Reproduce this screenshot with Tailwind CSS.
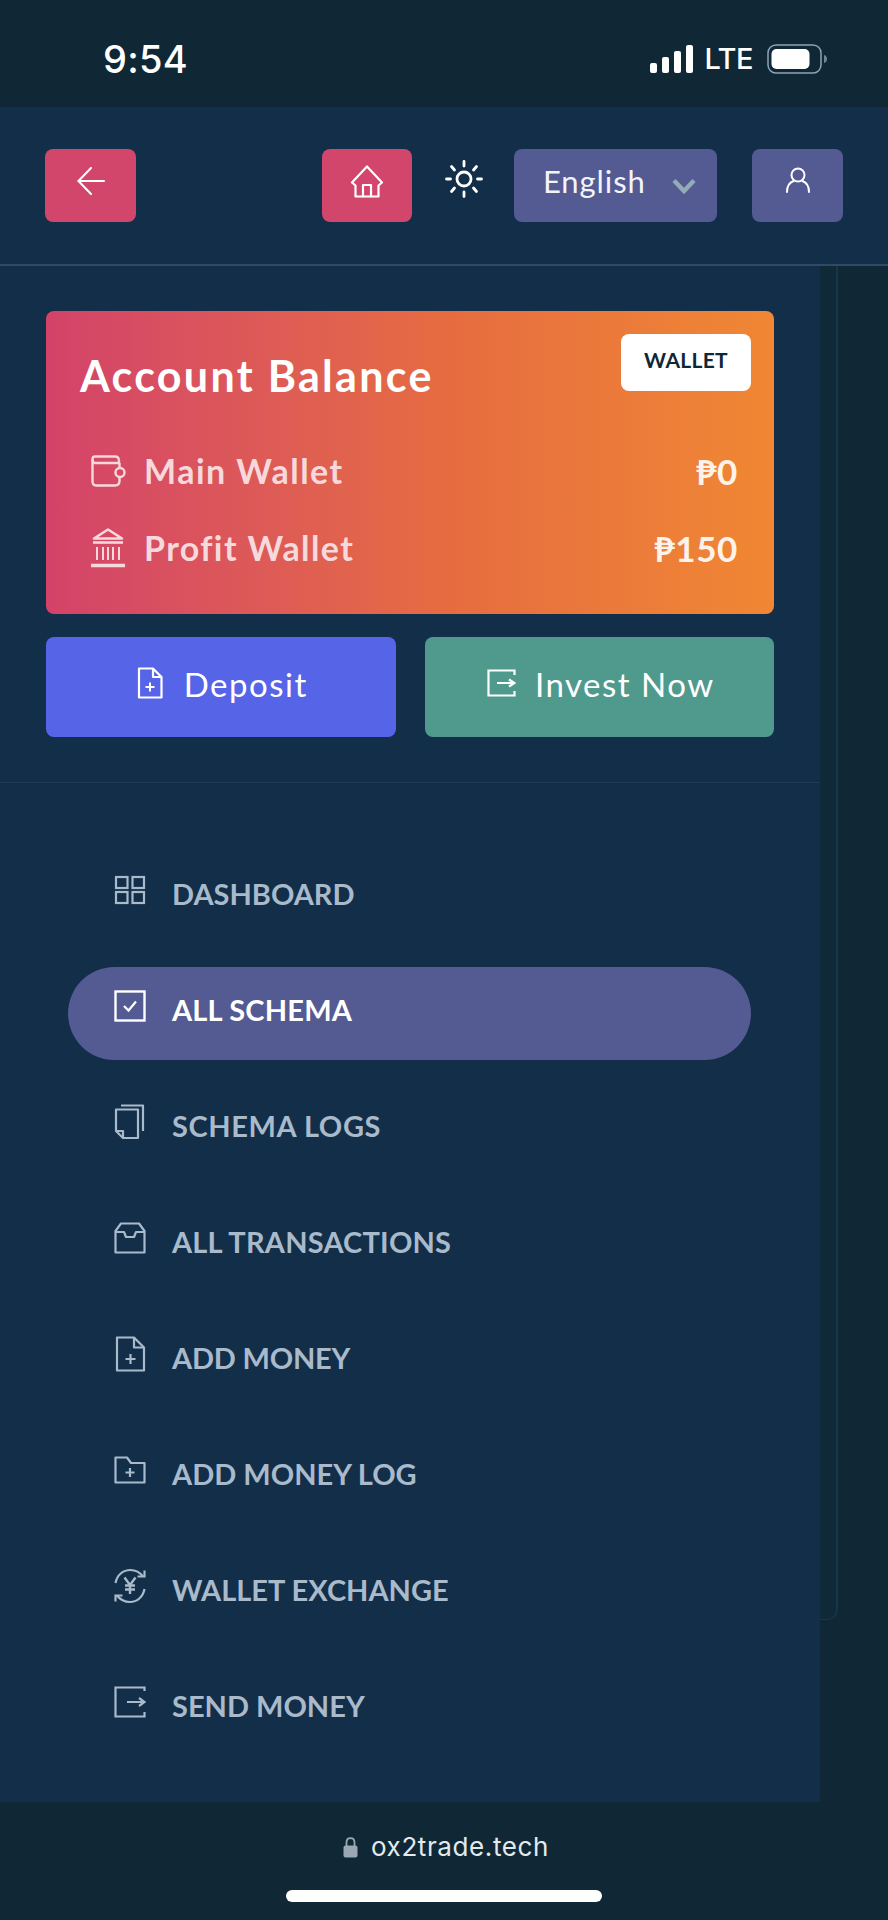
<!DOCTYPE html>
<html lang="en">
<head>
<meta charset="utf-8">
<title>ox2trade</title>
<script src="https://cdn.jsdelivr.net/npm/@tailwindcss/browser@4"></script>
</head>
<body class="m-0 bg-[#102735]">
<div class="w-[888px] h-[1920px] flex flex-col overflow-hidden bg-[#102735] font-['Lato',sans-serif]">

  <!-- status bar -->
  <div class="h-[107px] shrink-0 flex items-start pt-[37px] pl-[103px] text-white">
    <span class="font-['Inter',sans-serif] font-medium text-[38px] leading-[44px] tracking-[0.3px]">9:54</span>
    <div class="ml-auto flex items-center h-[44px] pr-[60px]">
      <svg width="44" height="28" viewBox="0 0 44 28" fill="#fff"><rect x="0" y="18" width="7" height="10" rx="2"/><rect x="12" y="12" width="7" height="16" rx="2"/><rect x="24" y="6" width="7" height="22" rx="2"/><rect x="36" y="0" width="7" height="28" rx="2"/></svg>
      <span class="ml-[10px] font-['Inter',sans-serif] text-[29px] leading-[44px] font-medium tracking-[-0.5px]">LTE</span>
      <svg class="ml-[14px]" width="61" height="30" viewBox="0 0 61 30"><rect x="1" y="1" width="53" height="28" rx="8" fill="none" stroke="#8fa3b8" stroke-width="1.5"/><rect x="4.5" y="5" width="38" height="20" rx="5" fill="#fff"/><path d="M57 11c2 .6 3 2 3 4s-1 3.400-3 4z" fill="#6f8496"/></svg>
    </div>
  </div>

  <!-- top header -->
  <div class="h-[159px] shrink-0 bg-[#122e49] border-b-[2px] border-[#2e4a64] flex items-start pt-[42px] pl-[45px] pr-[45px]">
    <div class="w-[91px] h-[73px] rounded-[8px] bg-[#d2466b] flex justify-center pt-[18px]">
      <svg width="28" height="28" viewBox="0 0 28 28" fill="none" stroke="#fff" stroke-width="2" stroke-linecap="round" stroke-linejoin="round"><path d="M14 1 1.500 14 14 27"/><path d="M1.500 14H27"/></svg>
    </div>
    <div class="ml-auto w-[90px] h-[73px] rounded-[8px] bg-[#d2466b] flex justify-center pt-[16px]">
      <svg width="34" height="33" viewBox="0 0 34 33" fill="none" stroke="#fff" stroke-width="2.200" stroke-linejoin="round" stroke-linecap="round"><path d="M17 1.500 2 17.500 5.500 20.500V31.500H28.500V20.500L32 17.500z"/><path d="M13 31.500V20H21V31.500"/></svg>
    </div>
    <svg class="ml-[33px] mt-[11px]" width="38" height="38" viewBox="0 0 38 38" fill="none" stroke="#fff" stroke-width="2.800" stroke-linecap="round"><circle cx="19" cy="19" r="7"/><path d="M19 1.500V6M19 32V36.500M1.500 19H5.500M32.500 19H36.500M6.500 6.500 9.500 10M28.500 28 31.500 31.500M31.500 6.500 28.500 10M9.500 28 6.500 31.500"/></svg>
    <div class="ml-[31px] w-[203px] h-[73px] rounded-[8px] bg-[#545a92] flex items-start pl-[29px] pt-[12px] text-[#f3f4f8]">
      <span class="text-[31px] leading-[40px] tracking-[0.9px]">English</span>
      <svg class="ml-[26px] mt-[17px]" width="24" height="16" viewBox="0 0 24 16" fill="none" stroke="#93abb6" stroke-width="4.500"><path d="M2 2.500 12 13 22 2.500"/></svg>
    </div>
    <div class="ml-[35px] w-[91px] h-[73px] rounded-[8px] bg-[#545a92] flex justify-center pt-[18px]">
      <svg width="26" height="26" viewBox="0 0 26 26" fill="none" stroke="#fff" stroke-width="2" stroke-linecap="round"><circle cx="13" cy="8" r="6.500"/><path d="M2 25c0-6 2.500-9.500 6.500-11M24 25c0-6-2.500-9.500-6.500-11"/></svg>
    </div>
  </div>

  <!-- body -->
  <div class="flex-1 flex min-h-0">
    <aside class="w-[820px] shrink-0 bg-[#122e49] flex flex-col">
      <div class="h-[517px] shrink-0 border-b border-[#1f3a55] px-[46px] pt-[45px]">
        <!-- balance card -->
        <div class="h-[303px] rounded-[8px] bg-gradient-to-r from-[#d34269] via-[#e66c40] via-55% to-[#f08733] relative pl-[34px] pr-[36px]">
          <div class="absolute right-[23px] top-[23px] w-[130px] h-[57px] rounded-[8px] bg-white flex items-center justify-center pb-[6px] text-[#102735] font-bold text-[21px] tracking-[0.3px]">WALLET</div>
          <div class="pt-[40px] text-white font-bold text-[43px] leading-[50px] tracking-[2.300px]">Account Balance</div>
          <div class="mt-[46px] flex items-center h-[48px] pl-[11px]">
            <svg width="36" height="32" viewBox="0 0 36 32" fill="none" stroke="#f6d9dc" stroke-width="2.400" stroke-linejoin="round"><path d="M4 1.500H24C27 1.500 28 3 28 6V8H4C2.500 8 1.500 6.500 1.500 4.500S2.500 1.500 4 1.500z"/><path d="M1.500 4.500V26C1.500 29 3 30.500 5 30.500H24C27 30.500 28.500 29 28.500 26V22"/><path d="M28.500 8V13"/><circle cx="29" cy="17.500" r="4.500"/></svg>
            <span class="ml-[17px] text-[#f6d9dc] font-bold text-[34px] leading-[48px] tracking-[1.500px]">Main Wallet</span>
            <span class="ml-auto text-[#fdf3ea] font-bold text-[35px] leading-[48px] tracking-[0.6px]">₱0</span>
          </div>
          <div class="mt-[29px] flex items-center h-[48px] pl-[10px]">
            <svg width="36" height="40" viewBox="0 0 36 40" fill="none" stroke="#f6d9dc" stroke-width="2.400" stroke-linejoin="round"><path d="M18 1.500 4 10.500H32z" stroke-width="2.600"/><path d="M3 14.500H33" stroke-width="2.600"/><path d="M7 19V32M13 19V32M18 19V32M23 19V32M29 19V32" stroke-width="2"/><path d="M1 37.500H35" stroke-width="3.500"/></svg>
            <span class="ml-[18px] text-[#f6d9dc] font-bold text-[34px] leading-[48px] tracking-[1.400px]">Profit Wallet</span>
            <span class="ml-auto text-[#fdf3ea] font-bold text-[35px] leading-[48px] tracking-[0.6px]">₱150</span>
          </div>
        </div>
        <!-- actions -->
        <div class="mt-[23px] flex gap-[29px]">
          <div class="flex-1 h-[100px] rounded-[8px] bg-[#5664e8] flex items-start justify-center pt-[25px] pl-[3px] text-white">
            <svg class="mt-[5px]" width="26" height="32" viewBox="0 0 26 32" fill="none" stroke="#fff" stroke-width="2.200" stroke-linejoin="round"><path d="M2 1.500H16L24.500 10V30.500H2z"/><path d="M16 1.500V10H24.500"/><path d="M13 15.500V24.500M8.500 20H17.500" stroke-width="2"/></svg>
            <span class="ml-[21px] text-[33px] leading-[44px] tracking-[1.500px]">Deposit</span>
          </div>
          <div class="flex-1 h-[100px] rounded-[8px] bg-[#4f9a8c] flex items-start justify-center pt-[25px] pl-[3px] text-white">
            <svg class="mt-[7px]" width="29" height="28" viewBox="0 0 29 28" fill="none" stroke="#fff" stroke-width="2.200"><path d="M27.500 6V1.500H1.500V26.500H27.500V22"/><path d="M10 14H27M22 10.500 27.500 14 22 17.500"/></svg>
            <span class="ml-[19px] text-[33px] leading-[44px] tracking-[1.500px]">Invest Now</span>
          </div>
        </div>
      </div>

      <!-- nav -->
      <nav class="pt-[68px] pl-[68px] flex flex-col gap-[23px] w-[751px] font-bold text-[29px] leading-[40px] text-[#a9bacb] tracking-[0px]">
        <a class="h-[93px] shrink-0 rounded-full flex items-center pl-[46px] pb-[7px]">
          <svg class="w-[32px] mb-[8px] shrink-0" height="30" viewBox="0 0 32 30" fill="none" stroke="#a9bacb" stroke-width="2.200"><rect x="2" y="2" width="11.500" height="11" /><rect x="18.500" y="2" width="11.500" height="11"/><rect x="2" y="17" width="11.500" height="11"/><rect x="18.500" y="17" width="11.500" height="11"/></svg>
          <span class="ml-[26px]">DASHBOARD</span>
        </a>
        <a class="h-[93px] shrink-0 rounded-full bg-[#545a92] flex items-center pl-[46px] pb-[7px] text-white">
          <svg class="w-[32px] mb-[8px] shrink-0" height="32" viewBox="0 0 32 32" fill="none" stroke="#fff" stroke-width="2.400"><rect x="1.500" y="1.500" width="29" height="29"/><path d="M10 16 14.500 20.500 22 11.500" stroke-width="2.200"/></svg>
          <span class="ml-[26px] tracking-[0.2px]">ALL SCHEMA</span>
        </a>
        <a class="h-[93px] shrink-0 rounded-full flex items-center pl-[46px] pb-[7px]">
          <svg class="w-[32px] mb-[8px] shrink-0" height="36" viewBox="0 0 32 36" fill="none" stroke="#a9bacb" stroke-width="2.200" stroke-linejoin="round"><path d="M2 5.500H24V34H9L2 27z"/><path d="M2 27H9V34"/><path d="M7 1.500H29V27"/></svg>
          <span class="ml-[26px] tracking-[0.6px]">SCHEMA LOGS</span>
        </a>
        <a class="h-[93px] shrink-0 rounded-full flex items-center pl-[46px] pb-[7px]">
          <svg class="w-[32px] mb-[8px] shrink-0" height="32" viewBox="0 0 32 32" fill="none" stroke="#a9bacb" stroke-width="2.200" stroke-linejoin="round"><path d="M7 1.500H25L30.500 9V30.500H1.500V9z"/><path d="M1.500 10H10L12 15H20L22 10H30.500"/></svg>
          <span class="ml-[26px] tracking-[0.2px]">ALL TRANSACTIONS</span>
        </a>
        <a class="h-[93px] shrink-0 rounded-full flex items-center pl-[46px] pb-[7px]">
          <svg class="w-[32px] mb-[8px] shrink-0" height="36" viewBox="0 0 32 36" fill="none" stroke="#a9bacb" stroke-width="2.200" stroke-linejoin="round"><path d="M3 1.500H20L30 11.500V34.500H3z"/><path d="M20 1.500V11.500H30"/><path d="M16.500 18V28M11.500 23H21.500"/></svg>
          <span class="ml-[26px] tracking-[-0.2px]">ADD MONEY</span>
        </a>
        <a class="h-[93px] shrink-0 rounded-full flex items-center pl-[46px] pb-[7px]">
          <svg class="w-[32px] mb-[8px] shrink-0" height="28" viewBox="0 0 32 28" fill="none" stroke="#a9bacb" stroke-width="2.200" stroke-linejoin="round"><path d="M1.500 1.500H13L17 7H30.500V26.500H1.500z"/><path d="M16 12V21M11.500 16.500H20.500"/></svg>
          <span class="ml-[26px]">ADD MONEY LOG</span>
        </a>
        <a class="h-[93px] shrink-0 rounded-full flex items-center pl-[46px] pb-[7px]">
          <svg class="w-[34px] -ml-[1px] mb-[8px] shrink-0" height="36" viewBox="0 0 34 36" fill="none" stroke="#a9bacb" stroke-width="2.200"><path d="M2.500 15C4 7 10 2 17.500 2C23 2 27 4.500 30 8.500"/><path d="M31.500 21C30 29 24 34 17 34C11 34 7 31.500 4 27.500"/><path d="M24.500 8.500H31.500V2.500" stroke-width="2.200"/><path d="M9.500 27.500H2.500V33.500" stroke-width="2.200"/><path d="M11.500 9.500 17 17 22.500 9.500M17 17V26M12 17.500H22M12 21.500H22" stroke-width="2.400"/></svg>
          <span class="ml-[25px]">WALLET EXCHANGE</span>
        </a>
        <a class="h-[93px] shrink-0 rounded-full flex items-center pl-[46px] pb-[7px]">
          <svg class="w-[32px] mb-[8px] shrink-0" height="32" viewBox="0 0 32 32" fill="none" stroke="#a9bacb" stroke-width="2.200"><path d="M30.500 5V1.500H1.500V30.500H30.500V26"/><path d="M13 16H30M25 12 30.500 16 25 20"/></svg>
          <span class="ml-[26px]">SEND MONEY</span>
        </a>
      </nav>
    </aside>

    <!-- page peeking out behind the sidebar -->
    <div class="flex-1">
      <div class="w-[18px] h-[1354px] border-r-[2px] border-b-[1px] border-[#18344a] rounded-br-[10px] bg-[#0f2936]"></div>
    </div>
  </div>

  <!-- safari footer -->
  <div class="h-[118px] shrink-0 flex flex-col items-center">
    <div class="mt-[23px] h-[44px] flex items-center text-[#e3eaee] pl-[4px]">
      <svg width="15" height="21" viewBox="0 0 15 21"><path d="M3.500 9V5.500C3.500 3 5 1.200 7.500 1.200S11.500 3 11.500 5.500V9" fill="none" stroke="#9aa8b4" stroke-width="1.800"/><rect x="0.500" y="8.500" width="14" height="12" rx="2" fill="#9aa8b4"/></svg>
      <span class="ml-[13px] font-['Inter',sans-serif] text-[26px] leading-[44px] tracking-[0.6px]">ox2trade.tech</span>
    </div>
    <div class="mt-[21px] w-[316px] h-[12px] rounded-full bg-white"></div>
  </div>
</div>
</body>
</html>
